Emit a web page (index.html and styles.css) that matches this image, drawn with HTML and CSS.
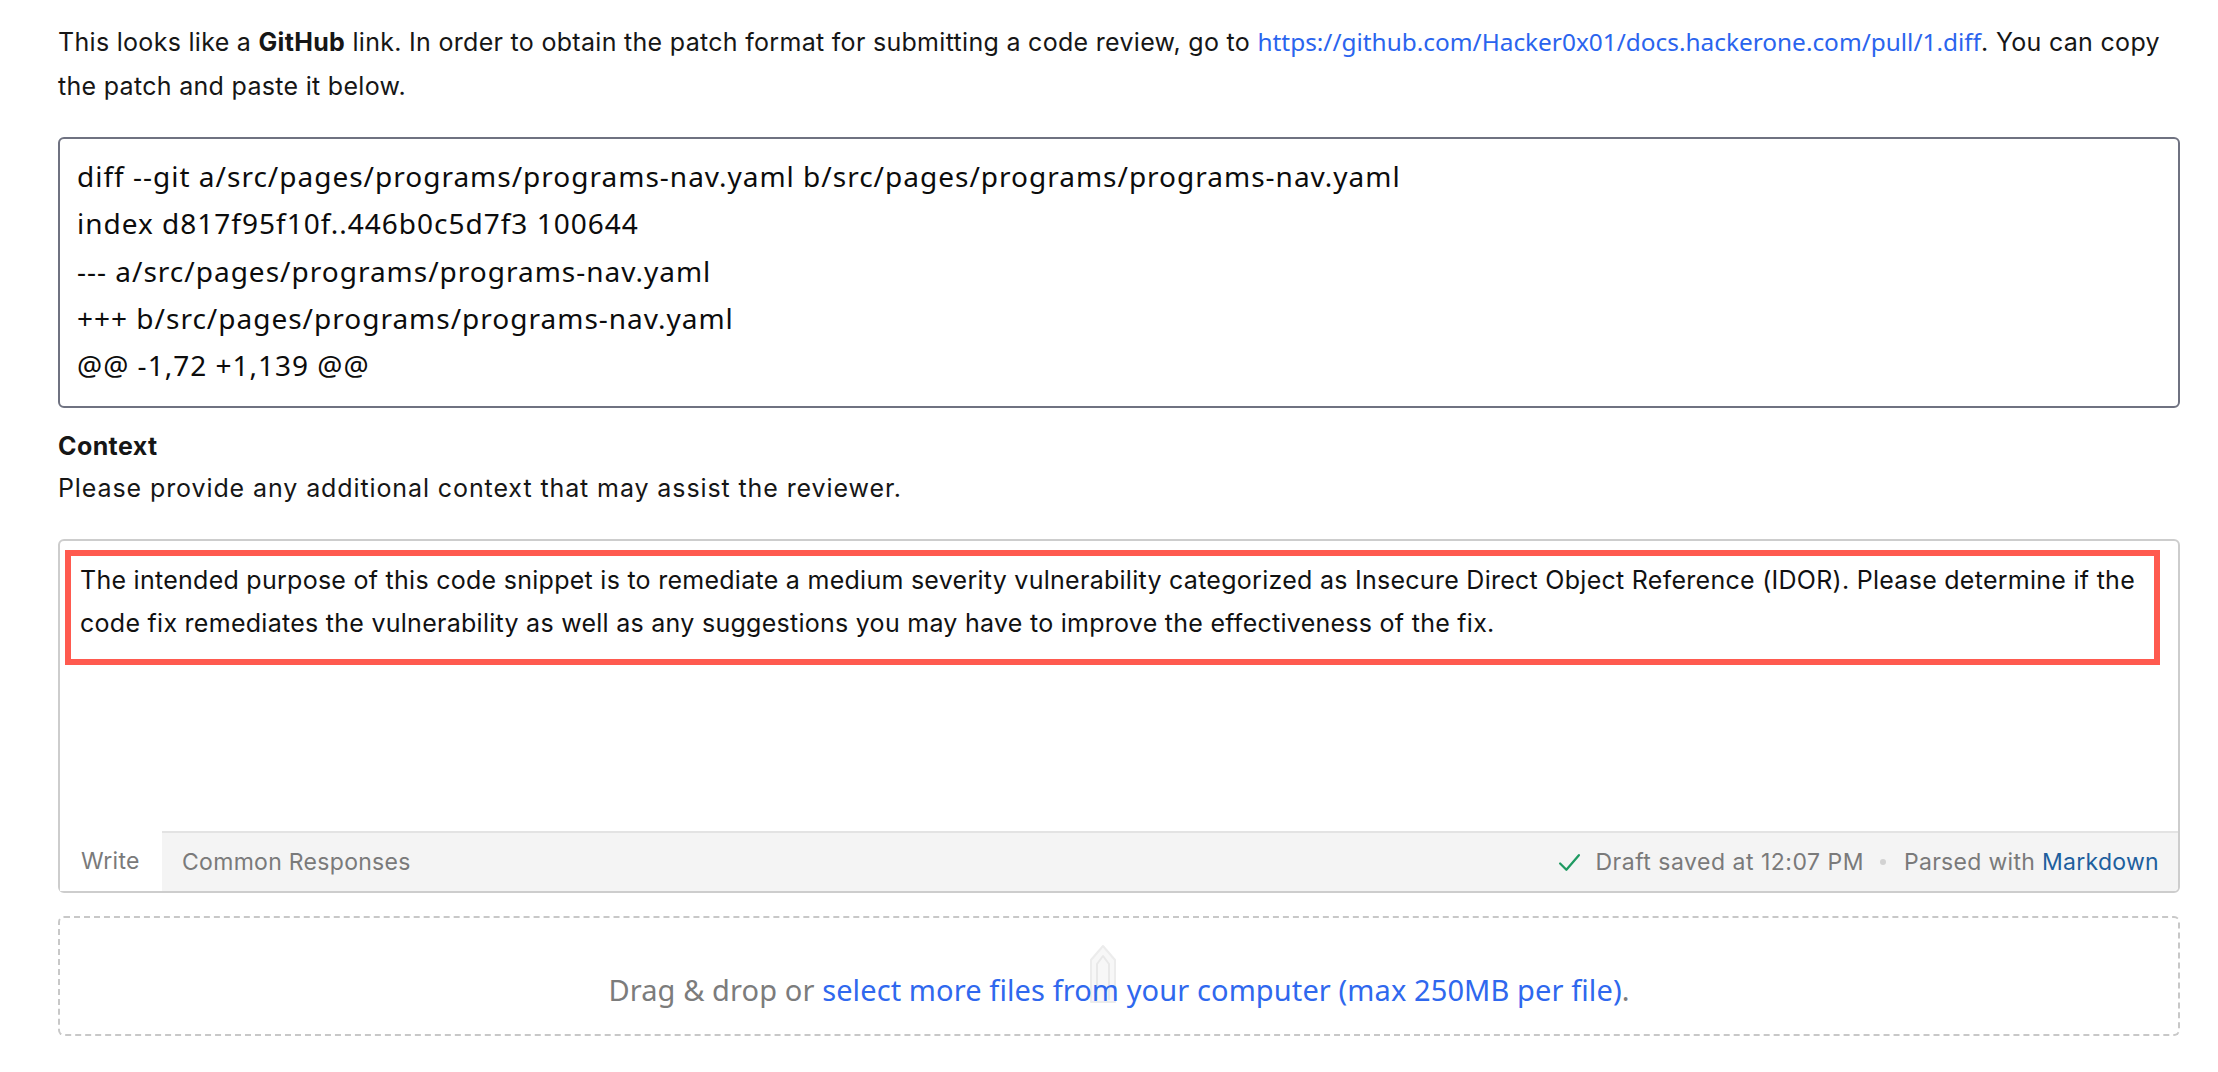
FILE: index.html
```html
<!DOCTYPE html>
<html lang="en">
<head>
<meta charset="utf-8">
<title>Code review</title>
<link rel="stylesheet" href="styles.css">
</head>
<body>
<main class="page">
  <p class="intro">This looks like a <strong>GitHub</strong> link. In order to obtain the patch format for submitting a code review, go to <a href="#" class="link">https://github.com/Hacker0x01/docs.hackerone.com/pull/1.diff</a>. You can copy the patch and paste it below.</p>

  <div class="patch">
    <div class="patch-line">diff --git a/src/pages/programs/programs-nav.yaml b/src/pages/programs/programs-nav.yaml</div>
    <div class="patch-line">index d817f95f10f..446b0c5d7f3 100644</div>
    <div class="patch-line">--- a/src/pages/programs/programs-nav.yaml</div>
    <div class="patch-line">+++ b/src/pages/programs/programs-nav.yaml</div>
    <div class="patch-line">@@ -1,72 +1,139 @@</div>
  </div>

  <h3 class="label">Context</h3>
  <p class="hint">Please provide any additional context that may assist the reviewer.</p>

  <div class="editor">
    <div class="editor-body">
      <div class="highlight">The intended purpose of this code snippet is to remediate a medium severity vulnerability categorized as Insecure Direct Object Reference (IDOR). Please determine if the code fix remediates the vulnerability as well as any suggestions you may have to improve the effectiveness of the fix.</div>
    </div>
    <div class="editor-footer">
      <div class="tab-active">Write</div>
      <div class="toolbar">
        <span>Common Responses</span>
        <div class="status">
          <svg class="check" viewBox="0 0 24 24" width="24" height="24"><polyline points="3,13 9,19 21,5" fill="none" stroke="#1f9a62" stroke-width="2.2" stroke-linecap="round" stroke-linejoin="round"/></svg>
          <span class="draft">Draft saved at 12:07 PM</span>
          <span class="sep"></span>
          <span>Parsed with <a href="#" class="md">Markdown</a></span>
        </div>
      </div>
    </div>
  </div>

  <div class="dropzone">
    <svg class="clip" viewBox="0 0 30 60" width="30" height="60"><path d="M3 58 V16 L15 2 L27 16 V58 Z" fill="#f7f7f7" stroke="#ececec" stroke-width="2" stroke-linejoin="round"/><path d="M9 56 V20 L15 12 L21 20 V56" fill="none" stroke="#e8e8e8" stroke-width="2" stroke-linejoin="round"/></svg>
    <p class="drop-text">Drag &amp; drop or <a href="#" class="drop-link">select more files from your computer (max 250MB per file)</a>.</p>
  </div>
</main>
</body>
</html>
```

FILE: styles.css
```css
* { box-sizing: border-box; }
html, body { margin: 0; padding: 0; background: #fff; }
body {
  font-family: Inter, "Liberation Sans", sans-serif;
  color: #161616;
}
.page {
  padding: 20px 38px 0 58px;
  width: 2218px;
}
.intro {
  margin: 0;
  font-size: 25px;
  letter-spacing: 0.3px;
  line-height: 44px;
}
.intro strong { font-weight: 700; }
.link {
  color: #2a64ee;
  text-decoration: none;
  font-family: "Noto Sans", sans-serif;
  font-size: 24.4px;
  letter-spacing: 0;
}

.patch {
  margin-top: 29px;
  border: 2px solid #6f7281;
  border-radius: 6px;
  padding: 14px 16px 16px 17px;
  height: 271px;
  font-family: "Noto Sans", sans-serif;
  font-size: 28px;
  letter-spacing: 1px;
  line-height: 47.3px;
  color: #0c0c0c;
}
.patch-line { white-space: pre; }

.label {
  margin: 18px 0 0;
  font-size: 25px;
  letter-spacing: 0.4px;
  line-height: 40px;
  font-weight: 700;
}
.hint {
  margin: 0;
  font-size: 25px;
  letter-spacing: 0.9px;
  line-height: 44px;
}

.editor {
  margin-top: 29px;
  border: 2px solid #cdcdcd;
  border-radius: 6px;
  height: 354px;
  display: flex;
  flex-direction: column;
}
.editor-body {
  flex: 1;
  padding: 9px 18px 0 5px;
}
.highlight {
  border: 6px solid #ff5a4f;
  padding: 3px 12px 14px 9px;
  font-size: 25px;
  letter-spacing: 0.27px;
  line-height: 43px;
  color: #111;
}
.editor-footer {
  display: flex;
  height: 60px;
  font-size: 23px;
  letter-spacing: 0.3px;
  color: #7a7a7a;
}
.tab-active {
  width: 102px;
  padding-left: 21px;
  display: flex;
  align-items: center;
  background: #fff;
}
.toolbar {
  flex: 1;
  display: flex;
  align-items: center;
  justify-content: space-between;
  background: #f4f4f4;
  border-top: 2px solid #e3e3e3;
  padding: 0 19px 0 20px;
  border-bottom-right-radius: 4px;
}
.status {
  display: flex;
  align-items: center;
  gap: 10px;
}
.check { width: 25px; height: 25px; margin-right: 3px; }
.draft { letter-spacing: 0.5px; }
.sep {
  width: 6px; height: 6px;
  border-radius: 50%;
  background: #d2d2d2;
  margin: 0 8px 0 6px;
}
.md { color: #1e5f9e; text-decoration: none; }

.dropzone {
  position: relative;
  margin-top: 23px;
  height: 120px;
  border: 2px dashed #c8c8c8;
  border-radius: 6px;
  display: flex;
  justify-content: center;
  padding-top: 52px;
}
.clip {
  position: absolute;
  left: 1028px;
  top: 26px;
}
.drop-text {
  position: relative;
  margin: 0;
  font-family: "Noto Sans", sans-serif;
  font-size: 29px;
  letter-spacing: 0.1px;
  line-height: 40px;
  color: #7c7c7c;
}
.drop-link { color: #2f68ee; text-decoration: none; }
```
